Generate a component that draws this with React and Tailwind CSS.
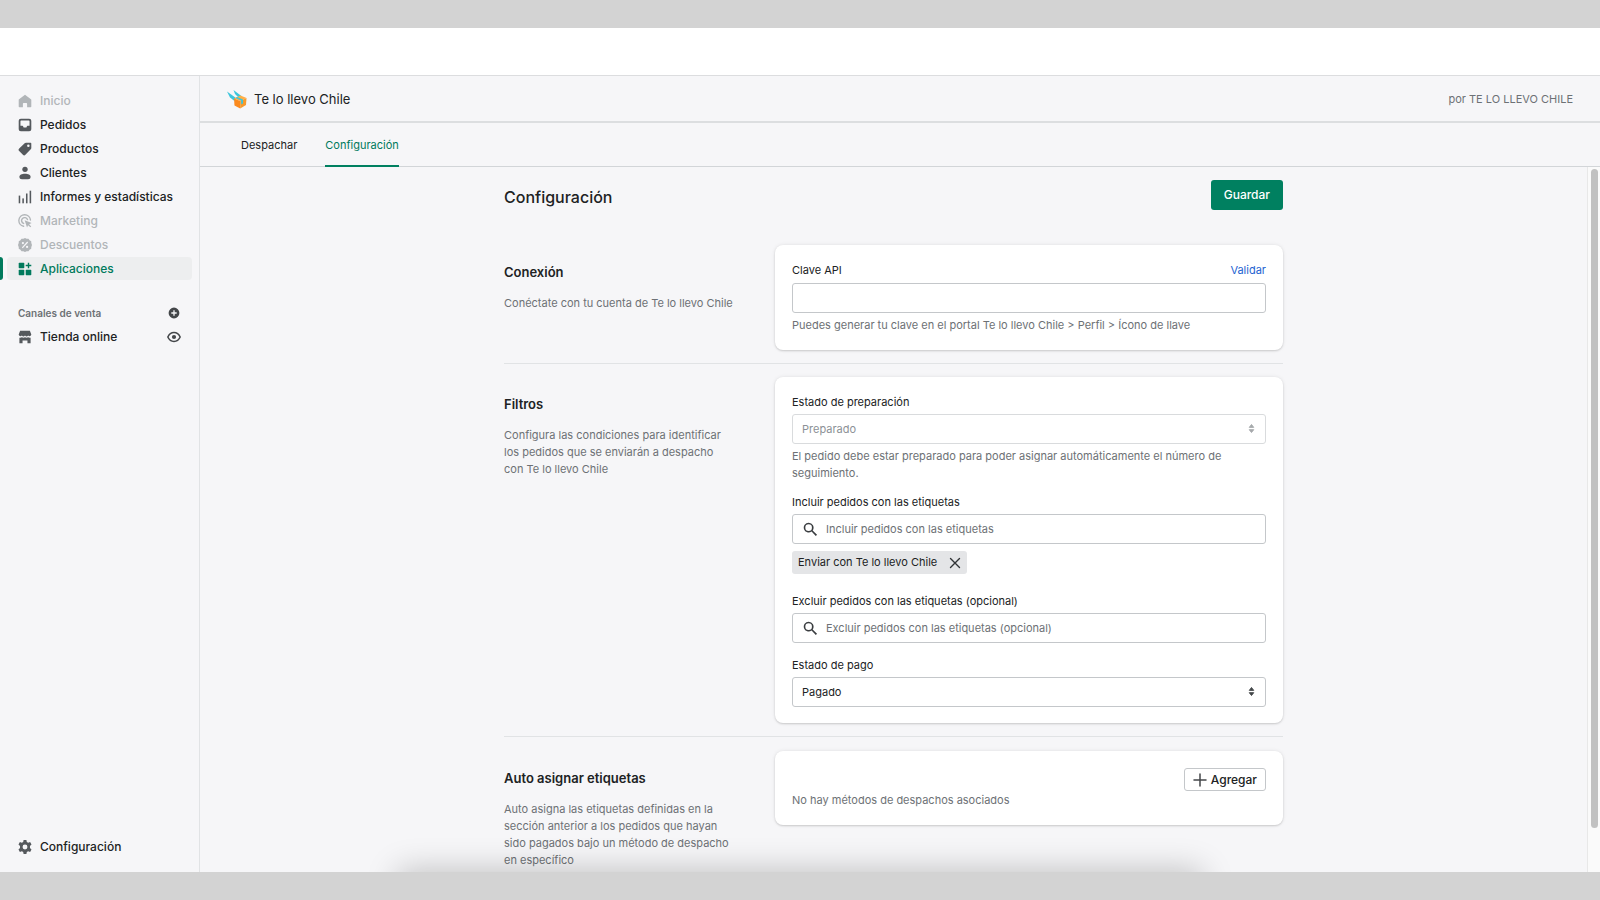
import React from "react";

const navItems = [
    { name: "Inicio", icon: "home", state: "disabled" },
    { name: "Pedidos", icon: "orders" },
    { name: "Productos", icon: "products" },
    { name: "Clientes", icon: "customers" },
    { name: "Informes y estadísticas", icon: "analytics" },
    { name: "Marketing", icon: "marketing", state: "disabled" },
    { name: "Descuentos", icon: "discounts", state: "disabled" },
    { name: "Aplicaciones", icon: "apps", state: "active" },
];

const itemColors = {
    default: "text-[#202223]",
    disabled: "text-[#b1b5b8]",
    active: "bg-[#edeeef] text-[#007a5c]",
};

const iconColors = {
    default: "text-[#55595d]",
    disabled: "text-[#b1b5b8]",
    active: "text-[#007a5c]",
};

const icons = {
    home: <path d="M10 1 1.500 7.500A1.500 1.500 0 0 0 1 8.600V18a1 1 0 0 0 1 1h5v-5a1 1 0 0 1 1-1h4a1 1 0 0 1 1 1v5h5a1 1 0 0 0 1-1V8.600a1.500 1.500 0 0 0-.5-1.100Z" />,
    orders: <path fillRule="evenodd" d="M4 1a3 3 0 0 0-3 3v12a3 3 0 0 0 3 3h12a3 3 0 0 0 3-3V4a3 3 0 0 0-3-3Zm.5 2.500h11a1 1 0 0 1 1 1V11h-2.700a1 1 0 0 0-.9.600L12 13.500H8l-.9-1.900a1 1 0 0 0-.9-.6H3.500V4.500a1 1 0 0 1 1-1Z" />,
    products: <path fillRule="evenodd" d="M9.500 1.800A2.500 2.500 0 0 1 11.300 1H18a1 1 0 0 1 1 1v6.500a2.500 2.500 0 0 1-.8 1.800l-7.600 7.900a2.500 2.500 0 0 1-3.600 0L1.700 12.800a2.500 2.500 0 0 1 0-3.600ZM14.800 7a1.800 1.800 0 1 0 0-3.600 1.800 1.800 0 0 0 0 3.600Z" />,
    customers: (
        <>
            <circle cx="10" cy="4.800" r="3.800" />
            <path d="M2 15.500C2 12.800 5.500 11 10 11s8 1.800 8 4.500c0 2.500-1.500 3.500-3.500 3.500h-9C3.500 19 2 18 2 15.500Z" />
        </>
    ),
    analytics: (
        <>
            <rect x="1" y="8" width="2.200" height="11" />
            <rect x="6.200" y="12" width="2.200" height="7" />
            <rect x="11.400" y="5" width="2.200" height="14" />
            <rect x="16.600" y="1" width="2.200" height="18" />
        </>
    ),
    marketing: (
        <>
            <path fill="none" stroke="currentColor" strokeWidth="2" strokeLinecap="round" d="M17.800 8.500A8.300 8.300 0 1 0 8 17.500M13.500 8a4.300 4.300 0 1 0-5.500 5.500" />
            <path d="m9.500 9 10 3.700-3.600 1.800 3 3.200-1.300 1.300-3.200-3.100-1.500 3.400Z" />
        </>
    ),
    discounts: (
        <path fillRule="evenodd" d="m10 0 2.300 1.100 2.700-.1 1.500 2.200 2.400 1.300.1 2.700L20 10l-1 2.800-.1 2.700-2.400 1.300L15 19l-2.700-.1L10 20l-2.300-1.100L5 19l-1.500-2.200-2.400-1.300L1 12.800 0 10l1-2.800.1-2.700 2.400-1.300L5 1l2.700.1Zm3.200 5-7.700 8.500 1.300 1.300L14.500 6.300ZM7 8.800a1.600 1.600 0 1 0 0-3.200 1.600 1.600 0 0 0 0 3.200Zm6 5.600a1.600 1.600 0 1 0 0-3.200 1.600 1.600 0 0 0 0 3.200Z" />
    ),
    apps: (
        <>
            <rect x="1" y="1" width="8" height="8" rx="1" />
            <rect x="1" y="11" width="8" height="8" rx="1" />
            <rect x="11" y="11" width="8" height="8" rx="1" />
            <path d="M14 1h2v3h3v2h-3v3h-2V6h-3V4h3Z" />
        </>
    ),
    store: (
        <path fillRule="evenodd" d="M3 1h14l2 5.500a2.600 2.600 0 0 1-4.500 1.500 3 3 0 0 1-4.500 0 3 3 0 0 1-4.500 0A2.600 2.600 0 0 1 1 6.500ZM2 11c1.500.3 2.500 0 3.600-.6 1.400.8 3 .8 4.400 0 1.400.8 3 .8 4.400 0 1.100.6 2.100.9 3.600.6v8h-4.500v-4h-7v4H2Z" />
    ),
    plusCircle: (
        <path fillRule="evenodd" d="M10 1a9 9 0 1 0 0 18 9 9 0 0 0 0-18Zm-1.100 4.500h2.200v3.400h3.400v2.200h-3.400v3.400H8.900v-3.400H5.500V8.900h3.400Z" />
    ),
    eye: (
        <>
            <path fill="none" stroke="currentColor" strokeWidth="2.200" d="M1.200 10C3 6 6.200 3.700 10 3.700S17 6 18.800 10C17 14 13.800 16.300 10 16.300S3 14 1.200 10Z" />
            <circle cx="10" cy="10" r="3" />
        </>
    ),
    gear: (
        <path fillRule="evenodd" d="M8 0h4l.6 2.900 1.900 1.100 2.800-1 2 3.500-2.200 1.900v3.200l2.200 1.900-2 3.500-2.800-1-1.900 1.100L12 20H8l-.6-2.900L5.500 16l-2.800 1-2-3.500 2.200-1.900V8.400L.7 6.500l2-3.500 2.800 1 1.900-1.100ZM10 6.500a3.500 3.500 0 1 0 0 7 3.500 3.500 0 0 0 0-7Z" />
    ),
    search: (
        <path fillRule="evenodd" d="M7.500 1a6.500 6.500 0 1 0 3.900 11.700l5.700 5.900 1.600-1.600-5.800-5.800A6.500 6.500 0 0 0 7.500 1Zm0 2.100a4.400 4.400 0 1 1 0 8.800 4.400 4.400 0 0 1 0-8.800Z" />
    ),
    updown: (
        <>
            <path d="M10 1 15 7.500H5Z" strokeWidth="2" stroke="currentColor" strokeLinejoin="round" />
            <path d="M10 19 5 12.500h10Z" strokeWidth="2" stroke="currentColor" strokeLinejoin="round" />
        </>
    ),
};

function Icon({ name, className }) {
    return (
        <svg viewBox="0 0 20 20" fill="currentColor" aria-hidden="true" className={"shrink-0 " + className}>
            {icons[name]}
        </svg>
    );
}

function Logo() {
    return (
        <svg viewBox="0 0 20 20" aria-hidden="true" className="h-5 w-5 shrink-0">
            <path d="M0 2.500 9 9l-1.500 3L3 8.500Z" fill="#3cc5dc" />
            <path d="M6.500 1 15 7.500l-3 1.500L8 5Z" fill="#3cc5dc" />
            <path d="m7 9.500 6.500-3L19.500 9l-6.300 3Z" fill="#ffae45" />
            <path d="m7 9.500 6.200 2.500v7.500l-5.700-3Z" fill="#fb8a1e" />
            <path d="M13.200 12 19.500 9l-.5 7-5.800 3.500Z" fill="#f79a2d" />
            <path d="m10 8 6 2.600v3.900l-1.800.8v-3.800L8.600 9Z" fill="#3cc5dc" />
        </svg>
    );
}

function NavItem({ name, icon, state = "default" }) {
    return (
        <div className="flex">
            <span className={"w-[3px] rounded-r-sm " + (state === "active" ? "bg-[#007a5c]" : "")} />
            <a href="#" className={"ml-1 flex h-[23px] flex-1 items-center gap-2 rounded-sm pl-[11px] text-xs font-medium " + itemColors[state]}>
                <Icon name={icon} className={"h-[14px] w-[14px] " + iconColors[state]} />
                {name}
            </a>
        </div>
    );
}

function Sidebar() {
    return (
        <nav className="flex w-[200px] shrink-0 flex-col border-r border-[#e1e3e5] pt-[13px] pb-[14px]">
            <div className="flex flex-col gap-px pr-[7px]">
                {navItems.map((item) => (
                    <NavItem key={item.name} {...item} />
                ))}
            </div>
            <div className="mt-[21px] flex h-6 items-center justify-between pr-[19px] pl-[18px] text-[10px] font-semibold text-[#6d7175]">
                Canales de venta
                <button type="button" aria-label="Agregar canal">
                    <Icon name="plusCircle" className="h-3 w-3 text-[#44474a]" />
                </button>
            </div>
            <div className="flex items-center justify-between pr-[18px]">
                <NavItem name="Tienda online" icon="store" />
                <button type="button" aria-label="Ver tienda">
                    <Icon name="eye" className="h-[14px] w-[14px] text-[#44474a]" />
                </button>
            </div>
            <div className="mt-auto">
                <NavItem name="Configuración" icon="gear" />
            </div>
        </nav>
    );
}

function Section({ title, description, children }) {
    return (
        <section className="flex items-start border-t border-[#e1e3e5] py-[13px] first:border-0 first:pt-0 last:pt-[14px]">
            <div className="flex-1 pt-[17px] pr-[41px]">
                <h2 className="text-[13px]/5 font-semibold">{title}</h2>
                <p className="mt-[13px] text-[#6d7175]">{description}</p>
            </div>
            <div className="w-[508px] rounded-lg bg-white px-[17px] pt-[17px] pb-4 shadow-[0_0_4px_rgba(23,24,24,0.08),0_1px_2px_rgba(0,0,0,0.15)]">
                {children}
            </div>
        </section>
    );
}

function SelectField({ id, label, value, disabled }) {
    return (
        <div className="flex flex-col gap-[3px]">
            <label htmlFor={id}>{label}</label>
            <div className="relative">
                <select
                    id={id}
                    disabled={disabled}
                    defaultValue={value}
                    className="block h-[30px] w-full appearance-none rounded-[3px] border border-[#c4c7ca] bg-white px-[9px] disabled:border-[#d9dbdd] disabled:text-[#8c9196] disabled:opacity-100"
                >
                    <option>{value}</option>
                </select>
                <Icon name="updown" className={"pointer-events-none absolute top-[10px] right-[10px] h-[9px] w-[9px] " + (disabled ? "text-[#a6a9ac]" : "text-[#44474a]")} />
            </div>
        </div>
    );
}

function SearchField({ id, label }) {
    return (
        <div className="flex flex-col gap-[3px]">
            <label htmlFor={id}>{label}</label>
            <div className="flex h-[30px] items-center gap-2 rounded-[3px] border border-[#c4c7ca] pl-[10px]">
                <Icon name="search" className="h-[15px] w-[15px] text-[#3a3d40]" />
                <input id={id} type="text" placeholder={label} className="h-full flex-1 outline-none placeholder:text-[#6d7175]" />
            </div>
        </div>
    );
}

function Settings() {
    return (
        <main className="min-w-0 flex-1 overflow-hidden">
            <div className="mx-auto w-full max-w-[779px] pt-[13px]">
                <div className="mb-[35px] flex items-start justify-between">
                    <h1 className="pt-[5px] text-base/6 font-medium">Configuración</h1>
                    <button type="button" className="h-[30px] rounded-[3px] bg-[#008060] px-[13px] text-xs font-medium text-white">
                        Guardar
                    </button>
                </div>
                <div>
                    <Section title="Conexión" description="Conéctate con tu cuenta de Te lo llevo Chile">
                        <div className="flex justify-between">
                            <label htmlFor="api-key">Clave API</label>
                            <a href="#" className="text-[#2463d1]">Validar</a>
                        </div>
                        <input id="api-key" type="text" className="mt-1 block h-[30px] w-full rounded-[3px] border border-[#c4c7ca] px-[9px]" />
                        <p className="mt-1 text-[#6d7175]">Puedes generar tu clave en el portal Te lo llevo Chile &gt; Perfil &gt; Ícono de llave</p>
                    </Section>
                    <Section
                        title="Filtros"
                        description="Configura las condiciones para identificar los pedidos que se enviarán a despacho con Te lo llevo Chile"
                    >
                        <SelectField id="preparation" label="Estado de preparación" value="Preparado" disabled />
                        <p className="mt-1 mb-3 text-[#6d7175]">
                            El pedido debe estar preparado para poder asignar automáticamente el número de seguimiento.
                        </p>
                        <SearchField id="include" label="Incluir pedidos con las etiquetas" />
                        <div className="flex">
                            <div className="mt-[7px] mb-[19px] flex h-[23px] items-center gap-3 rounded-[3px] bg-[#e4e5e7] px-[6px]">
                                Enviar con Te lo llevo Chile
                                <button type="button" aria-label="Quitar etiqueta">
                                    <svg viewBox="0 0 12 12" className="h-3 w-3" fill="none" stroke="#303336" strokeWidth="1.400" strokeLinecap="round">
                                        <path d="m1.500 1.500 9 9m0-9-9 9" />
                                    </svg>
                                </button>
                            </div>
                        </div>
                        <SearchField id="exclude" label="Excluir pedidos con las etiquetas (opcional)" />
                        <div className="mt-[14px]">
                            <SelectField id="payment" label="Estado de pago" value="Pagado" />
                        </div>
                    </Section>
                    <Section
                        title="Auto asignar etiquetas"
                        description="Auto asigna las etiquetas definidas en la sección anterior a los pedidos que hayan sido pagados bajo un método de despacho en específico"
                    >
                        <div className="flex justify-end">
                            <button type="button" className="flex h-[23px] items-center gap-1 rounded-[3px] border border-[#c4c7ca] px-2 text-xs font-medium">
                                <svg viewBox="0 0 14 14" className="h-[14px] w-[14px]" fill="none" stroke="#44474a" strokeWidth="1.500" strokeLinecap="round">
                                    <path d="M7 1v12M1 7h12" />
                                </svg>
                                Agregar
                            </button>
                        </div>
                        <p className="mt-px text-[#6d7175]">No hay métodos de despachos asociados</p>
                    </Section>
                </div>
            </div>
        </main>
    );
}

export default function App() {
    return (
        <div className="flex h-screen flex-col overflow-hidden bg-[#d3d3d3] py-7 font-['Inter',sans-serif] text-[11px]/[17px] text-[#202223]">
            <div className="relative flex min-h-0 flex-1 flex-col overflow-hidden bg-[#f6f6f8]">
                <header className="h-12 shrink-0 border-b border-[#dcdddf] bg-white" />
                <div className="flex min-h-0 flex-1">
                    <Sidebar />
                    <div className="flex min-w-0 flex-1 flex-col">
                        <div className="flex h-[47px] shrink-0 items-center border-b-2 border-[#dcdee0] px-[27px] pt-px">
                            <Logo />
                            <span className="ml-[7px] text-[13px]">Te lo llevo Chile</span>
                            <span className="ml-auto text-[#6d7175]">por TE LO LLEVO CHILE</span>
                        </div>
                        <div role="tablist" className="flex h-[44px] shrink-0 gap-7 border-b border-[#d2d5d8] pl-[41px]">
                            <button type="button" role="tab" aria-selected="false" className="h-[44px] border-b-2 border-transparent pt-[2px]">Despachar</button>
                            <button type="button" role="tab" aria-selected="true" className="h-[44px] border-b-2 border-[#008060] pt-[2px] text-[#007a5c]">Configuración</button>
                        </div>
                        <div className="flex min-h-0 flex-1">
                            <Settings />
                            <div className="w-[13px] shrink-0 border-l border-[#e8e8e8] bg-[#fafafa] px-[3px] pt-[2px] pb-11">
                                <div className="h-full w-[7px] rounded-full bg-[#c1c1c1]" />
                            </div>
                        </div>
                    </div>
                </div>
                <div className="pointer-events-none absolute top-full right-[25%] left-[25%] h-10 shadow-[0_0_32px_2px_rgba(0,0,0,0.22)]" />
            </div>
        </div>
    );
}
